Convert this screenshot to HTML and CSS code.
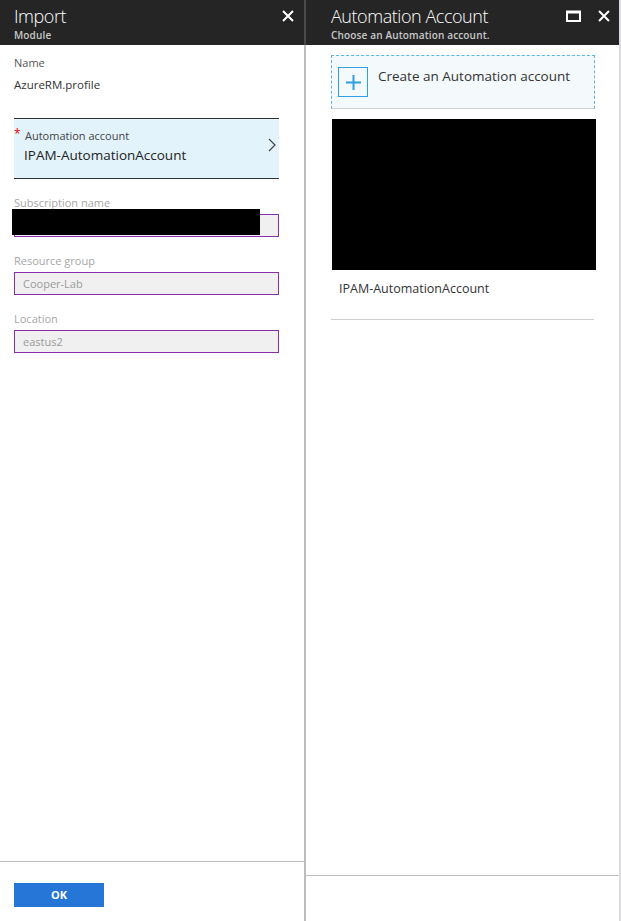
FILE: index.html
```html
<!DOCTYPE html>
<html>
<head>
<meta charset="utf-8">
<link rel="stylesheet" href="styles.css">
</head>
<body>
<div class="blades">
  <section class="blade blade-left">
    <header class="bhead">
      <div class="htext">
        <div class="title">Import</div>
        <div class="subtitle">Module</div>
      </div>
      <div class="hicons">
        <svg class="icon" width="12" height="12" viewBox="0 0 12 12"><path d="M1 1L11 11M11 1L1 11" stroke="#fff" stroke-width="2" fill="none"/></svg>
      </div>
    </header>
    <div class="bbody">
      <div class="content">
        <div class="lbl">Name</div>
        <div class="val">AzureRM.profile</div>
        <div class="selector">
          <div class="sel-text">
            <div class="sel-lbl"><span class="req">*</span>Automation account</div>
            <div class="sel-val">IPAM-AutomationAccount</div>
          </div>
          <svg class="chev" width="8" height="14" viewBox="0 0 8 14"><path d="M1 1L7 7L1 13" stroke="#444" stroke-width="1.2" fill="none"/></svg>
        </div>
        <div class="field">
          <div class="flbl">Subscription name</div>
          <div class="finput"></div>
          <div class="redact"></div>
        </div>
        <div class="field">
          <div class="flbl">Resource group</div>
          <div class="finput">Cooper-Lab</div>
        </div>
        <div class="field">
          <div class="flbl">Location</div>
          <div class="finput">eastus2</div>
        </div>
      </div>
      <footer class="lfoot">
        <button class="ok">OK</button>
      </footer>
    </div>
  </section>
  <section class="blade blade-right">
    <header class="bhead">
      <div class="htext">
        <div class="title">Automation Account</div>
        <div class="subtitle">Choose an Automation account.</div>
      </div>
      <div class="hicons">
        <svg class="icon" width="15" height="12" viewBox="0 0 15 12"><path d="M1 1.5H14V11H1Z" stroke="#fff" stroke-width="2" fill="none"/><path d="M1 2.5H14" stroke="#fff" stroke-width="2"/></svg>
        <svg class="icon" width="12" height="12" viewBox="0 0 12 12"><path d="M1 1L11 11M11 1L1 11" stroke="#fff" stroke-width="2" fill="none"/></svg>
      </div>
    </header>
    <div class="bbody">
      <div class="content rcontent">
        <div class="create">
          <div class="plus">
            <svg width="17" height="17" viewBox="0 0 17 17"><path d="M8.5 1V16M1 8.5H16" stroke="#2d9fe4" stroke-width="2" fill="none"/></svg>
          </div>
          <div class="create-text">Create an Automation account</div>
        </div>
        <div class="item">
          <div class="tile"></div>
          <div class="item-name">IPAM-AutomationAccount</div>
        </div>
        <div class="sep"></div>
      </div>
      <footer class="rfoot"></footer>
    </div>
  </section>
</div>
</body>
</html>
```

FILE: styles.css
```css
* { box-sizing: border-box; }
html, body { margin: 0; padding: 0; }
body {
  font-family: "Segoe UI", "Open Sans", "Noto Sans", sans-serif;
  background: #fff;
  color: #333;
}
.blades {
  display: flex;
  height: 921px;
  width: 621px;
}
.blade {
  display: flex;
  flex-direction: column;
  height: 100%;
}
.blade-left { width: 306px; }
.blade-right { width: 315px; }
.bhead {
  height: 45px;
  background: #252525;
  display: flex;
  justify-content: space-between;
  align-items: flex-start;
  border-right: 2px solid #4a4a4a;
}
.blade-right .bhead { border-right-color: #dcdce0; }
.htext { padding: 3px 0 0 14px; }
.blade-right .htext { padding-left: 25px; }
.title {
  color: #fff;
  font-size: 18px;
  font-weight: 300;
  line-height: 26px;
  letter-spacing: -0.45px;
}
.subtitle {
  color: #c8c8c8;
  font-size: 10px;
  font-weight: 600;
  line-height: 12px;
  letter-spacing: 0.15px;
}
.hicons {
  display: flex;
  gap: 17px;
  padding: 10px 10px 0 0;
}
.blade-right .hicons { padding-right: 9px; }
.bbody {
  flex: 1;
  display: flex;
  flex-direction: column;
  border-right: 2px solid #bdbdbd;
}
.blade-right .bbody { border-right-color: #dcdce0; }
.content {
  flex: 1;
  padding: 10px 25px 0 14px;
}
.lbl {
  font-size: 11px;
  line-height: 16px;
  color: #555;
}
.val {
  font-size: 11.5px;
  line-height: 16px;
  color: #333;
  margin-top: 6px;
}
.selector {
  margin-top: 25px;
  border-top: 1px solid #333;
  border-bottom: 1px solid #333;
  background: #e2f3fb;
  height: 61px;
  display: flex;
  align-items: center;
  justify-content: space-between;
  padding: 0 3px 0 0;
}
.sel-text { margin-top: -4px; }
.sel-lbl {
  font-size: 11px;
  line-height: 14px;
  color: #444;
  position: relative;
  padding-left: 11px;
}
.req {
  color: #e00;
  position: absolute;
  left: 0;
  top: -2px;
  font-size: 12px;
}
.sel-val {
  font-size: 13.5px;
  line-height: 18px;
  color: #222;
  margin-top: 3px;
  padding-left: 10px;
}
.chev { margin-top: -8px; }
.field {
  margin-top: 17px;
  position: relative;
}
.flbl {
  font-size: 11px;
  line-height: 14px;
  color: #a6a6a6;
}
.finput {
  margin-top: 4px;
  height: 23px;
  border: 1px solid #8b2cab;
  background: #f0f0f0;
  font-size: 11px;
  line-height: 21px;
  padding-left: 8px;
  color: #9a9a9a;
}
.redact {
  position: absolute;
  left: -2px;
  top: 13px;
  width: 248px;
  height: 26px;
  background: #000;
}
.lfoot {
  height: 60px;
  border-top: 1px solid #bdbdbd;
  padding: 20px 0 0 14px;
}
.ok {
  width: 90px;
  height: 24px;
  background: #2576d6;
  color: #fff;
  border: none;
  font-family: inherit;
  font-size: 11px;
  font-weight: 700;
  padding: 0;
  margin: 0;
}
.rcontent { padding: 10px 0 0 25px; }
.create {
  width: 264px;
  height: 54px;
  border: 1px dashed #5ab4e8;
  border-bottom: 1px solid #cfd3d6;
  background: #f4f9fc;
  display: flex;
  align-items: flex-start;
  padding: 11px 0 0 6px;
}
.plus {
  width: 30px;
  height: 30px;
  border: 1px solid #2d9fe4;
  display: flex;
  align-items: center;
  justify-content: center;
}
.create-text {
  font-size: 13.5px;
  line-height: 18px;
  color: #333;
  margin-left: 10px;
  margin-top: 0;
}
.item {
  margin-top: 10px;
  padding-bottom: 21px;
}
.tile {
  margin-left: 1px;
  width: 264px;
  height: 151px;
  background: #000;
}
.item-name {
  margin-top: 10px;
  padding-left: 8px;
  font-size: 12.5px;
  line-height: 18px;
  color: #333;
}
.sep {
  width: 263px;
  height: 1px;
  background: #cfcfcf;
}
.rfoot {
  height: 46px;
  border-top: 1px solid #bdbdbd;
}
```
